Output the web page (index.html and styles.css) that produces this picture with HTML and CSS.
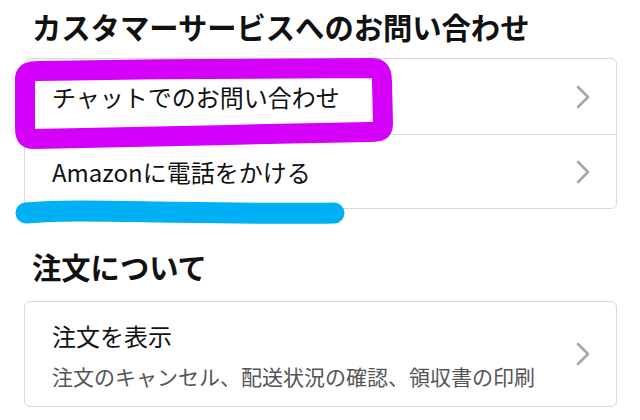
FILE: index.html
```html
<!DOCTYPE html>
<html lang="ja">
<head>
<meta charset="utf-8">
<link rel="stylesheet" href="styles.css">
</head>
<body>
<main class="page">
  <section class="group">
    <h2 class="group-title">カスタマーサービスへのお問い合わせ</h2>
    <div class="card">
      <a class="row">
        <span class="row-title">チャットでのお問い合わせ</span>
        <svg class="chev" viewBox="0 0 14 24" width="14" height="24"><path d="M2 2 L12 12 L2 22"/></svg>
      </a>
      <a class="row">
        <span class="row-title">Amazonに電話をかける</span>
        <svg class="chev" viewBox="0 0 14 24" width="14" height="24"><path d="M2 2 L12 12 L2 22"/></svg>
      </a>
    </div>
  </section>
  <section class="group group-second">
    <h2 class="group-title">注文について</h2>
    <div class="card">
      <a class="row row-tall">
        <span class="row-text">
          <span class="row-title">注文を表示</span>
          <span class="row-sub">注文のキャンセル、配送状況の確認、領収書の印刷</span>
        </span>
        <svg class="chev" viewBox="0 0 14 24" width="14" height="24"><path d="M2 2 L12 12 L2 22"/></svg>
      </a>
    </div>
  </section>
  <svg class="annot" viewBox="0 0 640 420" width="640" height="420">
    <path class="mark-pink" d="M25 72 C 26 66, 30 65, 40 65 C 150 63, 280 62, 372 62 C 380 62, 382 66, 382 76 L 383 118 C 383 125, 380 126, 370 126 C 260 128, 140 131, 34 133 C 27 133, 25 130, 25 122 L 25 74"/>
    <path class="mark-blue" d="M26 207 C 60 204, 100 205, 160 206 C 230 207, 290 208, 334 207"/>
  </svg>
</main>
</body>
</html>
```

FILE: styles.css
```css
* { box-sizing: border-box; }
html, body { margin: 0; padding: 0; background: #ffffff; }
body {
  font-family: "Noto Sans CJK JP", "Noto Sans", sans-serif;
  color: #111111;
  width: 640px;
  height: 420px;
  overflow: hidden;
}
.page {
  position: relative;
  padding: 0 23px 0 24px;
}
.group-title {
  margin: 6px 0 12px 8px;
  font-size: 29.3px;
  line-height: 40px;
  font-weight: 700;
  color: #111111;
}
.group-second .group-title {
  margin-top: 37px;
  margin-bottom: 15px;
}
.card {
  border: 1px solid #d9d9d9;
  border-radius: 6px;
  background: #ffffff;
}
.row {
  display: flex;
  align-items: center;
  justify-content: space-between;
  height: 75px;
  padding: 0 26px 0 27px;
  color: #111111;
  text-decoration: none;
}
.row + .row { border-top: 1px solid #d9d9d9; height: 74px; }
.row-title {
  font-size: 24px;
  line-height: 34px;
}
.row-tall { height: 104px; }
.row-text { display: flex; flex-direction: column; gap: 8px; padding-top: 2px; }
.row-sub {
  font-size: 21px;
  line-height: 30px;
  color: #555555;
}
.chev { flex: none; }
.chev path {
  fill: none;
  stroke: #a6a6a6;
  stroke-width: 2.6;
  stroke-linecap: round;
  stroke-linejoin: round;
}
.annot {
  position: absolute;
  left: 0;
  top: 0;
  pointer-events: none;
}
.mark-pink {
  fill: none;
  stroke: #d500f9;
  stroke-width: 20;
  stroke-linecap: round;
  stroke-linejoin: round;
}
.mark-blue {
  fill: none;
  stroke: #00b0f5;
  stroke-width: 21;
  stroke-linecap: round;
}
```
